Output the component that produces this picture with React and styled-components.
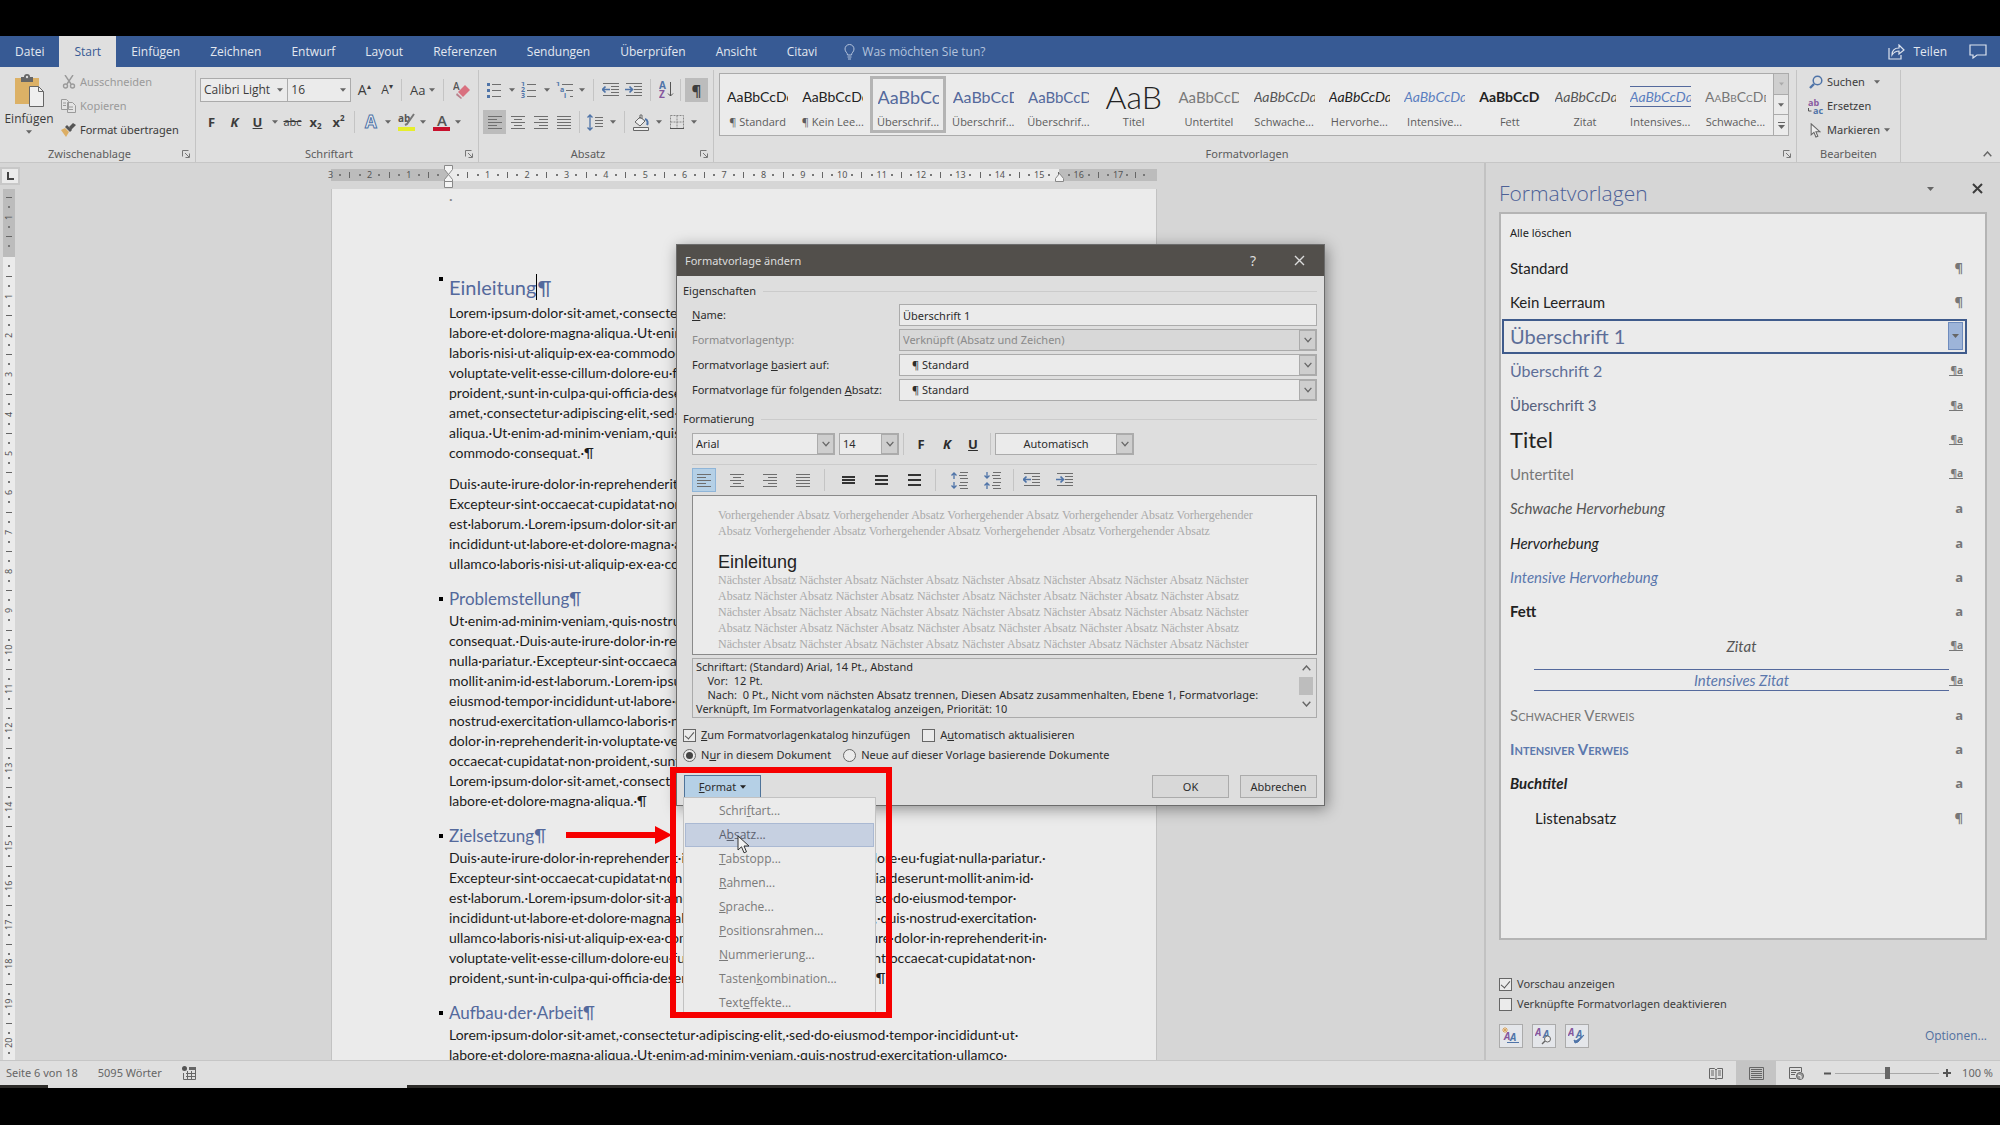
import React from 'react'
import styled, { createGlobalStyle, css } from 'styled-components'

const UI = '"Open Sans", "Noto Sans", sans-serif'
const UI_SMALL = '"Noto Sans", "Open Sans", sans-serif'
const CALIBRI = 'Lato, "Open Sans", sans-serif'

const C = {
  word: '#375a94',
  ribbon: '#dfdfdf',
  work: '#d6d6d6',
  paper: '#ebebeb',
  line: '#bdbdbd',
  border: '#ababab',
  text: '#3c3c3c',
  heading: '#54699c',
  icon: '#6e6e6e',
  blue: '#4f74a8',
  red: '#f60000',
}

const GlobalStyle = createGlobalStyle`
  * { box-sizing: border-box; }
  body { margin: 0; background: #000; }
  button, input, select { font: inherit; color: inherit; margin: 0; }
  button { background: none; border: 0; padding: 0; cursor: pointer; }
  svg { display: block; flex: none; }
`

const Screen = styled.div`
  position: relative;
  display: flex;
  flex-direction: column;
  height: 100vh;
  padding: 36px 0 37px;
  overflow: hidden;
  background: #000;
  color: ${C.text};
  font: 11px/16px ${UI_SMALL};
`

/* ---------- tab strip ---------- */

const TabStrip = styled.nav`
  display: flex;
  align-items: stretch;
  height: 31px;
  flex: none;
  background: ${C.word};
  color: #e3e8f0;
  font: 12px/16px ${UI};
`

const Tab = styled.button`
  padding: 0 15px;
  ${p => p.$active && css`
    background: ${C.ribbon};
    color: ${C.word};
  `}
`

const TellMe = styled.button`
  display: flex;
  align-items: center;
  gap: 7px;
  padding: 0 12px;
  color: #b4c3dc;
`

const ShareArea = styled.div`
  display: flex;
  align-items: center;
  gap: 22px;
  margin-left: auto;
  padding-right: 13px;
`

const ShareButton = styled.button`
  display: flex;
  align-items: center;
  gap: 8px;
`

/* ---------- ribbon ---------- */

const Ribbon = styled.div`
  display: flex;
  flex: none;
  height: 96px;
  padding: 3px 0 0;
  background: ${C.ribbon};
  border-bottom: 1px solid #c6c6c6;
`

const Group = styled.section`
  display: flex;
  flex-direction: column;
  padding: 0 4px;
  width: ${p => p.$w ? p.$w + 'px' : 'auto'};
  flex: ${p => p.$grow ? '1 1 0' : 'none'};
  min-width: 0;
  border-right: 1px solid #c4c4c4;
`

const GroupBody = styled.div`
  display: flex;
  flex-direction: ${p => p.$column ? 'column' : 'row'};
  flex: 1;
`

const GroupFooter = styled.div`
  display: flex;
  align-items: center;
  height: 16px;
  text-align: center;
  color: #5c5c5c;
  span { flex: 1; }
  button { padding: 2px 1px 2px 7px; }
`

const PasteButton = styled.button`
  display: flex;
  flex-direction: column;
  align-items: center;
  gap: 3px;
  width: 50px;
  padding-top: 4px;
  font: 12px/16px ${UI};
`

const CommandList = styled.div`
  display: flex;
  flex-direction: column;
  padding-left: 7px;
`

const Command = styled.button`
  display: flex;
  align-items: center;
  gap: 4px;
  height: 24px;
  white-space: nowrap;
  color: ${p => p.$off ? '#9a9a9a' : C.text};
`

const IconSlot = styled.span`
  display: flex;
  justify-content: center;
  width: 15px;
`

const ToolRow = styled.div`
  display: flex;
  align-items: center;
  height: 24px;
  margin-top: ${p => p.$mt || 0}px;
`

const Tool = styled.button`
  display: flex;
  align-items: center;
  justify-content: center;
  width: ${p => p.$w || 23}px;
  height: 24px;
  font-family: ${UI};
  font-size: ${p => p.$size || 13}px;
  font-weight: ${p => p.$bold ? 700 : 400};
  font-style: ${p => p.$italic ? 'italic' : 'normal'};
  text-decoration: ${p => p.$line || 'none'};
  background: ${p => p.$active ? '#bcbcbc' : 'none'};
  sub, sup { font-size: 8px; line-height: 8px; }
  sub { align-self: flex-end; margin-bottom: 4px; }
  sup { align-self: flex-start; margin-top: 4px; }
`

const Sep = styled.span`
  width: 1px;
  height: 22px;
  margin: 0 ${p => p.$m ?? 4}px;
  background: #c4c4c4;
`

const RibbonSelectBox = styled.span`
  display: grid;
  width: ${p => p.$w}px;
  height: 24px;
  align-items: center;
  border: 1px solid ${C.border};
  background: ${C.paper};
  margin-right: -1px;
  select {
    grid-area: 1 / 1;
    appearance: none;
    height: 22px;
    padding: 0 3px;
    border: 0;
    background: none;
    font: 12px/16px ${UI};
  }
  svg { grid-area: 1 / 1; justify-self: end; margin-right: 4px; pointer-events: none; }
`

const Gallery = styled.div`
  display: flex;
  align-self: flex-start;
  flex: 1;
  min-width: 0;
  height: 63px;
  margin: 3px 3px 0 1px;
  border: 1px solid ${C.border};
  background: ${C.paper};
`

const GalleryItem = styled.button`
  display: flex;
  flex-direction: column;
  align-items: center;
  flex: 1 1 0;
  min-width: 0;
  margin: 2px 0;
  padding: 0 4px;
  border: 3px solid ${p => p.$active ? '#b4b4b4' : 'transparent'};
`

const Sample = styled.span`
  display: flex;
  align-items: center;
  justify-content: ${p => p.$size > 20 ? 'center' : 'flex-start'};
  width: 61px;
  height: 26px;
  margin: 5px 0 5px;
  overflow: hidden;
  white-space: nowrap;
  font-family: ${CALIBRI};
  font-size: ${p => p.$size || 14}px;
  font-weight: ${p => p.$weight || 400};
  font-style: ${p => p.$italic ? 'italic' : 'normal'};
  font-variant: ${p => p.$caps ? 'small-caps' : 'normal'};
  color: ${p => p.$color || '#222'};
  ${p => p.$ruled && css`
    height: 22px;
    margin: 7px 0;
    border: solid ${C.heading};
    border-width: 1px 0;
  `}
`

const SampleName = styled.span`
  white-space: nowrap;
  font: 11px/16px ${UI};
  color: #5c5c5c;
`

const GalleryScroll = styled.div`
  display: flex;
  flex-direction: column;
  width: 15px;
  button {
    flex: 1;
    display: flex;
    align-items: center;
    justify-content: center;
    border-left: 1px solid ${C.border};
    border-bottom: 1px solid ${C.border};
  }
  button:first-child { background: #cfcfcf; }
  button:last-child { border-bottom: 0; }
`

const RibbonEnd = styled.div`
  display: flex;
  align-items: flex-end;
  justify-content: flex-end;
  width: 99px;
  padding: 0 8px 5px;
`

/* ---------- document area ---------- */

const Middle = styled.div`
  display: flex;
  flex: 1;
  min-height: 0;
  background: ${C.work};
`

const Editor = styled.main`
  display: flex;
  flex-direction: column;
  flex: 1;
  min-width: 0;
`

const RulerRow = styled.div`
  display: flex;
  height: 26px;
  flex: none;
  padding-top: 4px;
`

const TabSelector = styled.button`
  width: 20px;
  height: 18px;
  border: 2px solid #c8c8c8;
  background: ${C.paper};
  display: flex;
  align-items: center;
  justify-content: center;
`

const RulerTrack = styled.div`
  flex: 1;
  display: flex;
  justify-content: center;
  padding-right: 16px;
`

const Ruler = styled.div`
  position: relative;
  display: flex;
  width: 826px;
  height: 12px;
  margin-top: 2px;
  background: linear-gradient(to right, #bcbcbc 118px, ${C.paper} 118px 728px, #bcbcbc 728px);
  font-size: 9px;
  line-height: 12px;
  color: #555;
`

const RulerCells = styled.div`
  display: grid;
  grid-template-columns: repeat(20, 1fr);
  flex: none;
  width: 788px;
`

const RulerCell = styled.div`
  display: grid;
  grid-template-columns: repeat(4, 1fr);
  justify-items: center;
  align-items: center;
  i { width: 2px; height: 2px; background: #777; }
  b { width: 1px; height: 6px; background: #666; }
  span { width: 0; display: flex; justify-content: center; }
`

const RulerEdge = styled.span`
  flex: none;
  width: 4px;
  text-indent: -3px;
`

const RulerTail = styled(RulerCell)`
  flex: none;
  width: 34px;
`

// drag handles lying over the ruler
const IndentMarker = styled.svg`
  position: absolute;
  left: ${p => p.$x}px;
  top: ${p => p.$y}px;
`

const Canvas = styled.div`
  display: flex;
  flex: 1;
  min-height: 0;
  overflow: hidden;
`

const VRulerColumn = styled.div`
  width: 20px;
  padding-left: 3px;
`

const VRuler = styled.div`
  width: 12px;
  min-height: 100%;
  font-size: 9px;
  line-height: 12px;
  color: #555;
  background: linear-gradient(#bcbcbc 68px, ${C.paper} 68px);
  padding-top: 4px;
`

const VCell = styled.div`
  display: grid;
  grid-template-rows: repeat(4, 1fr);
  height: 39px;
  justify-items: center;
  align-items: center;
  &:nth-child(3n) { height: 40px; }
  i { width: 2px; height: 2px; background: #777; }
  b { width: 6px; height: 1px; background: #666; }
  span { writing-mode: vertical-rl; transform: rotate(180deg); height: 10px; display: flex; justify-content: center; }
`

const PageTrack = styled.div`
  flex: 1;
  display: flex;
  justify-content: center;
  padding-right: 16px;
`

const Page = styled.article`
  width: 826px;
  padding: 0 97px 0 117px;
  background: ${C.paper};
  border: solid #c2c2c2;
  border-width: 0 1px;
  font: 14px/20px ${CALIBRI};
  color: #1c1c1c;
  white-space: nowrap;
`

const HeaderMark = styled.div`
  height: 82px;
  color: #888;
`

const Heading = styled.h2`
  display: flex;
  align-items: center;
  height: ${p => p.$big ? 32 : 24}px;
  margin: ${p => p.$big ? 0 : 13}px 0 0 -10px;
  font-size: ${p => p.$big ? 20 : 17}px;
  font-weight: 400;
  color: ${C.heading};
  &::before {
    content: '';
    width: 4px;
    height: 4px;
    margin-right: 6px;
    background: #000;
    align-self: ${p => p.$big ? 'flex-start' : 'center'};
    margin-top: ${p => p.$big ? 6 : 0}px;
  }
`

const Caret = styled.span`
  width: 1px;
  height: 26px;
  background: #000;
`

const Paragraph = styled.p`
  margin: 0;
  & + & { margin-top: 11px; }
  span { display: block; }
`

/* ---------- styles pane ---------- */

const Pane = styled.aside`
  display: flex;
  flex-direction: column;
  width: 516px;
  padding: 10px 13px 0 13px;
  border-left: 2px solid #c2c2c2;
`

const PaneHeader = styled.header`
  display: flex;
  align-items: center;
  height: 39px;
  padding-bottom: 8px;
  gap: 37px;
  h1 {
    flex: 1;
    margin: 8px 0 0;
    font: 300 21px/30px ${UI};
    color: #4d6196;
  }
  button:last-child { margin-right: 4px; }
`

const StyleList = styled.ul`
  display: flex;
  flex-direction: column;
  height: 728px;
  margin: 0;
  padding: 2px 18px 103px 1px;
  list-style: none;
  border: 2px solid #b4b4b4;
  background: ${C.paper};
  li { flex: 1; display: flex; }
`

const StyleRow = styled.button`
  flex: 1;
  display: flex;
  align-items: center;
  padding: 0 2px 0 6px;
  text-align: left;
  border: 2px solid ${p => p.$active ? '#3f5b8c' : 'transparent'};
`

const StyleLabel = styled.span`
  flex: 1;
  font-family: ${p => p.$ui ? UI_SMALL : CALIBRI};
  font-size: ${p => p.$size || 15}px;
  line-height: 20px;
  color: ${p => p.$color || '#222'};
  font-weight: ${p => p.$weight || 400};
  font-style: ${p => p.$italic ? 'italic' : 'normal'};
  font-variant: ${p => p.$caps ? 'small-caps' : 'normal'};
  text-align: ${p => p.$center ? 'center' : 'left'};
  margin-left: ${p => p.$indent || 0}px;
  ${p => p.$ruled && css`
    border: solid ${C.heading};
    border-width: 1px 0;
  `}
`

const StyleMark = styled.span`
  width: 14px;
  text-align: right;
  font: 700 12px/14px ${UI};
  color: #777;
  border-bottom: ${p => p.$linked ? '1px solid #777' : 0};
  font-size: ${p => p.$linked ? 10 : 13}px;
  line-height: ${p => p.$linked ? 10 : 14}px;
`

const RowArrow = styled.span`
  display: flex;
  align-items: center;
  justify-content: center;
  width: 15px;
  height: 28px;
  border: 1px solid #6e8bbd;
  background: #9db4d9;
`

const PaneChecks = styled.div`
  display: flex;
  flex-direction: column;
  gap: 4px;
  margin-top: 36px;
`

const CheckLabel = styled.label`
  display: flex;
  align-items: center;
  gap: 5px;
  height: 16px;
  white-space: nowrap;
`

const CheckInput = styled.input`
  appearance: none;
  display: grid;
  place-items: center;
  width: 13px;
  height: 13px;
  border: 1px solid #666;
  background: ${C.paper};
  border-radius: ${p => p.type === 'radio' ? '50%' : 0};
  &[type='checkbox']:checked::after {
    content: '';
    width: 4px;
    height: 8px;
    margin-bottom: 2px;
    border: solid #555;
    border-width: 0 1px 1px 0;
    transform: rotate(40deg);
  }
  &[type='radio']:checked::after {
    content: '';
    width: 7px;
    height: 7px;
    border-radius: 50%;
    background: #444;
  }
`

const PaneFooter = styled.footer`
  display: flex;
  align-items: center;
  gap: 9px;
  margin-top: 12px;
  font: 12px/16px ${UI};
  a { margin-left: auto; color: #52709f; text-decoration: none; }
`

const PaneButton = styled.button`
  display: grid;
  place-items: center;
  width: 24px;
  height: 24px;
  border: 1px solid ${C.border};
  background: #e4e6ea;
`

/* ---------- status bar ---------- */

const StatusBar = styled.footer`
  display: flex;
  align-items: center;
  flex: none;
  height: 25px;
  padding: 0 7px 0 6px;
  gap: 20px;
  border-top: 1px solid #c6c6c6;
  background: ${C.ribbon};
  color: #666;
`

const ViewButtons = styled.div`
  display: flex;
  align-self: stretch;
  margin: 0 -12px 0 auto;
  button {
    display: grid;
    place-items: center;
    width: 40px;
  }
  button:nth-child(2) { background: #c4c4c4; }
`

const Zoom = styled.div`
  display: flex;
  align-items: center;
  gap: 4px;
  input {
    appearance: none;
    width: 104px;
    height: 13px;
    background: linear-gradient(#a8a8a8, #a8a8a8) center / 100% 1px no-repeat;
  }
  input::-webkit-slider-thumb {
    appearance: none;
    width: 5px;
    height: 12px;
    background: #666;
  }
  span { margin-left: 7px; }
`

const TaskbarEdge = styled.div`
  flex: none;
  height: 3px;
  background: linear-gradient(to right, #2c2b28 48px, #dcdcdc 48px 407px, #2c2b28 407px);
`

/* ---------- dialog ---------- */

const Dialog = styled.form`
  position: absolute;
  left: 676px;
  top: 244px;
  width: 649px;
  border: 1px solid #6c6c6c;
  background: #dedede;
  box-shadow: 2px 3px 14px rgba(0, 0, 0, 0.4);
  color: #2c2c2c;
`

const DialogTitle = styled.header`
  display: flex;
  align-items: center;
  height: 31px;
  padding: 0 19px 0 8px;
  gap: 38px;
  background: #524f4b;
  color: #dcdcdc;
  h1 { flex: 1; margin: 0; font-size: 11px; font-weight: 400; }
  button { font-size: 14px; }
`

const DialogBody = styled.div`
  display: flex;
  flex-direction: column;
  padding: 6px 7px 7px 6px;
`

const Legend = styled.div`
  display: flex;
  align-items: center;
  gap: 7px;
  height: 18px;
  &::after { content: ''; flex: 1; height: 1px; background: #cbcbcb; }
`

const Fields = styled.div`
  display: grid;
  grid-template-columns: 207px 1fr;
  row-gap: 3px;
  align-items: center;
  margin: 4px 0 9px 9px;
  label { white-space: nowrap; }
  label[data-off='true'] { color: #8a8a8a; }
`

const TextField = styled.input`
  height: 22px;
  padding: 0 3px;
  border: 1px solid ${C.border};
  background: ${C.paper};
`

const SelectBox = styled.span`
  display: grid;
  align-items: center;
  height: 22px;
  width: ${p => p.$w ? p.$w + 'px' : 'auto'};
  border: 1px solid ${C.border};
  background: ${p => p.$off ? '#d8d8d8' : C.paper};
  select {
    grid-area: 1 / 1;
    appearance: none;
    width: 100%;
    height: 20px;
    padding: 0 20px 0 ${p => p.$pad ?? 3}px;
    border: 0;
    background: none;
    opacity: 1;
    color: ${p => p.$off ? '#8a8a8a' : 'inherit'};
    text-align: ${p => p.$center ? 'center' : 'left'};
  }
`

const Arrow = styled.span`
  grid-area: 1 / 1;
  justify-self: end;
  display: grid;
  place-items: center;
  width: 17px;
  height: 20px;
  border: 1px solid ${C.border};
  background: #cecece;
  pointer-events: none;
`

const FormatRow = styled.div`
  display: flex;
  align-items: center;
  margin: ${p => p.$mt}px 0 0 9px;
  padding-bottom: ${p => p.$line ? 8 : 3}px;
  border-bottom: ${p => p.$line ? '1px solid #cbcbcb' : 0};
`

const Spacer = styled.span`
  width: ${p => p.$w}px;
`

const AlignTool = styled.button`
  display: grid;
  place-items: center;
  width: 24px;
  height: 24px;
  margin-right: 9px;
  border: 1px solid ${p => p.$active ? '#8fb5d8' : 'transparent'};
  background: ${p => p.$active ? '#b5d0e6' : 'none'};
`

const Preview = styled.div`
  height: 160px;
  margin: 0 0 3px 9px;
  padding: 11px 25px 0;
  overflow: hidden;
  border: 1px solid #8a8a8a;
  background: ${C.paper};
  font: 12px/16px "Liberation Serif", serif;
  color: #a9a9a9;
  white-space: nowrap;
  p { margin: 0; }
  h2 {
    margin: 13px 0 0;
    font: 18px/20px "Liberation Sans", sans-serif;
    color: #222;
  }
  span { display: block; }
`

const Description = styled.div`
  display: flex;
  height: 60px;
  margin-left: 9px;
  padding: 1px 2px 1px 3px;
  border: 1px solid ${C.border};
  line-height: 14px;
  p { flex: 1; margin: 0; white-space: pre; }
`

const ScrollBar = styled.div`
  display: flex;
  flex-direction: column;
  align-items: center;
  width: 16px;
  padding: 5px 0;
  gap: 6px;
  i { width: 14px; height: 18px; background: #bdbdbd; }
`

const Choices = styled.div`
  display: flex;
  gap: 12px;
  margin-top: ${p => p.$mt}px;
`

const DialogButtons = styled.div`
  position: relative;
  display: flex;
  gap: 11px;
  margin: 12px 0 0 1px;
`

const DialogButton = styled.button`
  display: flex;
  align-items: center;
  justify-content: center;
  gap: 4px;
  width: 77px;
  height: 23px;
  border: 1px solid ${C.border};
  background: #d8d8d8;
  ${p => p.$primary && css`
    margin-right: auto;
    border-color: #4f7399;
    background: #b5d0e6;
  `}
`

const Menu = styled.ul`
  position: absolute;
  left: -1px;
  top: 22px;
  width: 193px;
  margin: 0;
  padding: 1px 1px 0;
  list-style: none;
  border: 1px solid #c2c2c2;
  background: ${C.paper};
`

const MenuItem = styled.button`
  display: block;
  width: 100%;
  height: 24px;
  padding-left: 33px;
  text-align: left;
  font: 12px/16px ${UI};
  color: ${p => p.$active ? '#5c6270' : '#7a7a7a'};
  border: 1px solid ${p => p.$active ? '#aab9d3' : 'transparent'};
  background: ${p => p.$active ? '#c6d0e1' : 'none'};
`

/* ---------- annotations ---------- */

const RedFrame = styled.div`
  position: absolute;
  left: 670px;
  top: 767px;
  width: 222px;
  height: 251px;
  border: 6px solid ${C.red};
  pointer-events: none;
`

const RedArrow = styled.svg`
  position: absolute;
  left: 566px;
  top: 826px;
`

const Pointer = styled.svg`
  position: absolute;
  left: 737px;
  top: 834px;
`

/* ---------- icons ---------- */

const Down = ({ s = 7, c = '#666' }) => (
  <svg width={s} height={4} viewBox="0 0 7 4"><path d="M0 0h7L3.5 4z" fill={c} /></svg>
)

const Chevron = ({ up, c = '#666', s = 9 }) => (
  <svg width={s} height="6" viewBox="0 0 9 6">
    <path d={up ? 'M.7 5.3 4.5 1l3.8 4.3' : 'M.7.7 4.5 5 8.3.7'} fill="none" stroke={c} strokeWidth="1.4" />
  </svg>
)

const Cross = ({ s = 11, w = 1.4 }) => (
  <svg width={s} height={s} viewBox="0 0 11 11"><path d="M1 1l9 9M10 1l-9 9" stroke="currentColor" strokeWidth={w} /></svg>
)

const Launcher = () => (
  <svg width="8" height="8" viewBox="0 0 8 8" fill="none" stroke="#777">
    <path d="M.5 6.500V.5h6M3 3l4 4M7.500 3.500v4h-4" />
  </svg>
)

const ALIGN = {
  left: [[0, 14], [0, 9], [0, 14], [0, 9], [0, 14]],
  center: [[0, 14], [3, 8], [0, 14], [3, 8], [0, 14]],
  right: [[0, 14], [5, 9], [0, 14], [5, 9], [0, 14]],
  justify: [[0, 14], [0, 14], [0, 14], [0, 14], [0, 14]],
}

const AlignIcon = ({ kind }) => (
  <svg width="14" height="13" viewBox="0 0 14 13" fill={C.icon}>
    {ALIGN[kind].map(([x, w], i) => <rect key={i} x={x} y={i * 3} width={w} height="1" />)}
  </svg>
)

const SpacingIcon = ({ gap }) => (
  <svg width="13" height="14" viewBox="0 0 13 14" fill="#333">
    {[-1, 0, 1].map(i => <rect key={i} x="0" y={6 + i * gap} width="13" height="2" />)}
  </svg>
)

const ParaSpaceIcon = ({ inward }) => (
  <svg width="17" height="17" viewBox="0 0 17 17" fill="none">
    <path d={inward ? 'M3 0v6M.5 3.500 3 6l2.500-2.500M3 17v-6M.5 13.500 3 11l2.500 2.500' : 'M3 7V1M.5 3.500 3 1l2.500 2.500M3 10v6M.5 13.500 3 16l2.500-2.500'} stroke={C.blue} strokeWidth="1.300" />
    <path d="M9 .5h8M8 3.500h8M9 6.500h8M9 10.500h8M8 13.500h8M9 16.500h8" stroke={C.icon} />
  </svg>
)

const IndentIcon = ({ inward }) => (
  <svg width="17" height="14" viewBox="0 0 17 14" fill="none">
    <path d="M1 .5h16M9 3.500h8M9 6.500h8M9 9.500h8M1 12.500h16" stroke={C.icon} />
    <path d={inward ? 'M0 6.500h7M4.500 3.500l3 3-3 3' : 'M8 6.500H1M3.500 3.500l-3 3 3 3'} stroke={C.blue} strokeWidth="1.700" />
  </svg>
)

const ListIcon = ({ kind }) => (
  <svg width="17" height="16" viewBox="0 0 17 16">
    {[1, 7, 13].map((y, i) => {
      const dx = kind === 'multi' ? i * 4 : 0
      return (
        <g key={y}>
          {kind === 'bullet'
            ? <rect x="1" y={y} width="3" height="3" fill={C.blue} />
            : <text x={dx} y={y + 3} fontSize="7" fontWeight="700" fill={C.blue} fontFamily="Open Sans">{kind === 'multi' ? ['1', 'a', 'i'][i] : i + 1}</text>}
          <rect x={6 + dx} y={y + 1} width={kind === 'multi' ? 11 - dx : 9} height="1" fill={C.icon} />
        </g>
      )
    })}
  </svg>
)

const SortIcon = () => (
  <svg width="15" height="18" viewBox="0 0 15 18">
    <text x="0" y="8" fontSize="10" fontWeight="700" fill={C.blue} fontFamily="Open Sans">A</text>
    <text x="0" y="17" fontSize="10" fontWeight="700" fill="#85569c" fontFamily="Open Sans">Z</text>
    <path d="M11.500 1v14M9 12.500l2.500 2.500 2.500-2.500" fill="none" stroke="#555" />
  </svg>
)

const LineHeightIcon = () => (
  <svg width="17" height="17" viewBox="0 0 17 17" fill="none">
    <path d="M3 1v15M.5 3.500 3 1l2.500 2.500M.5 13.500 3 16l2.500-2.500" stroke={C.blue} strokeWidth="1.300" />
    <path d="M8 3.500h8M8 6.500h8M8 9.500h8M8 12.500h8" stroke={C.icon} />
  </svg>
)

const FillIcon = () => (
  <svg width="17" height="17" viewBox="0 0 17 17" fill="none" stroke="#666">
    <path d="M7 3 2 8l5 4 5-5zM7 5V1h2v4" fill="#eee" />
    <path d="M12 5c3 1 3 4 2 6" stroke={C.blue} strokeWidth="2" />
    <path d="M.5 13.500h15v3H.5z" fill="#eee" />
  </svg>
)

const BorderIcon = () => (
  <svg width="14" height="14" viewBox="0 0 14 14" fill="none" stroke="#888">
    <path d="M.5.5h13v13H.5zM7 .5v13M.5 7h13" strokeDasharray="2 1" /><path d="M0 13.500h14" stroke="#555" />
  </svg>
)

const PasteIcon = () => (
  <svg width="31" height="34" viewBox="0 0 31 34">
    <rect x="1" y="4" width="24" height="26" fill="#dcb166" />
    <path d="M7 8V3h3a3 3 0 0 1 6 0h3v5z" fill="#666" />
    <circle cx="13" cy="3" r="1.200" fill="#ddd" />
    <path d="M15.500 12.500h9l5 5v15h-14z" fill="#efefef" stroke="#666" />
    <path d="M24.500 12.500v5h5" fill="none" stroke="#666" />
  </svg>
)

const ScissorsIcon = () => (
  <svg width="14" height="14" viewBox="0 0 14 14" fill="none" stroke="#9a9a9a" strokeWidth="1.400">
    <path d="M3 0l6 9M11 0 5 9" /><circle cx="3.500" cy="11" r="2" /><circle cx="10.500" cy="11" r="2" />
  </svg>
)

const CopyIcon = () => (
  <svg width="15" height="14" viewBox="0 0 15 14" fill="#e4e4e4" stroke="#9a9a9a">
    <path d="M.5.5h5l2 2v8h-7zM6.500 3.500h5l3 3v7h-8z" /><path d="M8 8h4M8 10.500h4M2 4h3M2 6.500h3" />
  </svg>
)

const BrushIcon = () => (
  <svg width="15" height="14" viewBox="0 0 15 14">
    <path d="M0 7l4-2 4 4-3 5z" fill="#dcae64" /><path d="M4 4l2-2 5 5-2 2z" fill="#555" /><path d="M8 4l4-4 3 2-5 5z" fill="#555" />
  </svg>
)

const EraserIcon = () => (
  <svg width="17" height="18" viewBox="0 0 17 18">
    <text x="0" y="9" fontSize="10" fontWeight="600" fill="#555" fontFamily="Open Sans">A</text>
    <path d="M5 11l7-7 5 5-7 7z" fill="#d9707f" /><path d="M4 12l5 5-1 1-5-4z" fill="#b9808c" />
  </svg>
)

const MagnifierIcon = () => (
  <svg width="14" height="14" viewBox="0 0 14 14" fill="none">
    <circle cx="8.500" cy="5.500" r="4.300" stroke={C.blue} strokeWidth="1.500" /><path d="M5 9l-4 4" stroke={C.blue} strokeWidth="2.400" />
  </svg>
)

const ReplaceIcon = () => (
  <svg width="17" height="17" viewBox="0 0 17 17" fontFamily="Open Sans" fontWeight="700">
    <text x="1" y="8" fontSize="9" fill="#8a5ba0">ab</text>
    <text x="6" y="16" fontSize="9" fill={C.blue}>ac</text>
    <path d="M1.500 10v3h3" fill="none" stroke="#555" />
  </svg>
)

const ArrowPath = 'M1 1v14l3.500-3.200 2.500 6 2.500-1-2.500-5.800H12z'

const SelectIcon = () => (
  <svg width="11" height="15" viewBox="0 0 13 19"><path d={ArrowPath} fill="#eee" stroke="#666" strokeWidth="1.300" /></svg>
)

const BulbIcon = () => (
  <svg width="11" height="16" viewBox="0 0 11 16" fill="none" stroke="#b4c3dc">
    <path d="M3.500 11C3.500 8.500 1 8 1 5a4.500 4.500 0 0 1 9 0c0 3-2.500 3.500-2.500 6zM3.500 13h4M4 15h3" />
  </svg>
)

const ShareIcon = () => (
  <svg width="17" height="16" viewBox="0 0 17 16" fill="none" stroke="#dde3ee" strokeWidth="1.200">
    <path d="M1 4v11h12v-4M4 11c0-5 3-7 7-7V1l5 5-5 4V7c-3 0-5 1-7 4z" />
  </svg>
)

const CommentIcon = () => (
  <svg width="18" height="15" viewBox="0 0 18 15" fill="none" stroke="#dde3ee" strokeWidth="1.200">
    <path d="M1 1h16v10H8l-4 3v-3H1z" />
  </svg>
)

const BookIcon = () => (
  <svg width="14" height="13" viewBox="0 0 14 13" fill="none" stroke="#666">
    <path d="M.5 1.500h5L7 3l1.500-1.500h5v10h-5L7 12.500 5.500 11.500h-5zM7 3v9M2 4h3M2 6h3M2 8h3M9 4h3M9 6h3M9 8h3" />
  </svg>
)

const PrintViewIcon = () => (
  <svg width="15" height="13" viewBox="0 0 15 13" fill="none" stroke="#666">
    <path d="M.5.500h14v12H.5zM2 2.500h11M2 4.500h11M2 6.500h11M2 8.500h11M2 10.500h11" />
  </svg>
)

const WebViewIcon = () => (
  <svg width="15" height="13" viewBox="0 0 15 13" fill="none" stroke="#666">
    <path d="M7 11.500H.5V.5h12V5M2 3.500h9M2 5.500h5M2 7.500h4" /><circle cx="11" cy="9" r="3.500" fill="#999" /><path d="M9 8l3 1v3" stroke="#eee" />
  </svg>
)

const MacroIcon = () => (
  <svg width="14" height="14" viewBox="0 0 14 14" fill="none" stroke="#666">
    <path d="M7 2.500h6.500v11H1.500V7M4 7.500h9M4 10.500h9M5.500 5v8M9.500 5v8" /><path d="M7 1h7v3H7z" fill="#666" stroke="none" /><circle cx="2.500" cy="2.500" r="2.500" fill="#555" stroke="none" />
  </svg>
)

const StyleButtonIcon = ({ kind }) => (
  <svg width="18" height="18" viewBox="0 0 18 18" fontFamily="Open Sans" fontWeight="700" fontStyle="italic">
    <text x={kind === 'new' ? 2 : 0} y={kind === 'new' ? 13 : 9} fontSize="10" fill="#85569c">A</text>
    <text x="8" y={kind === 'new' ? 14 : 11} fontSize="10" fill={C.blue}>A</text>
    {kind === 'new' && <><path d="M3 0v6M0 3h6M1 1l4 4M5 1 1 5" stroke="#dba45a" /><path d="M5 15.500h12" stroke={C.blue} /></>}
    {kind === 'inspect' && <><circle cx="12.500" cy="12" r="3" fill="#eee" stroke="#666" /><path d="M10 14l-3 3" stroke="#666" strokeWidth="1.500" /></>}
    {kind === 'manage' && <path d="M16 8l-6 7-3 1-1-3 2 1z" fill={C.blue} stroke={C.blue} />}
  </svg>
)

const GlowA = () => (
  <svg width="16" height="18" viewBox="0 0 16 18">
    <text x="2" y="15" fontSize="17" fontWeight="700" fill="#eee" stroke={C.blue} strokeWidth="1" fontFamily="Open Sans">A</text>
  </svg>
)

const ColorBar = ({ color, children }) => (
  <svg width="18" height="20" viewBox="0 0 18 20" fontFamily="Open Sans">
    {children}
    <rect x="1" y="15" width="17" height="4" fill={color} />
  </svg>
)

/* ---------- data ---------- */

const TABS = ['Datei', 'Start', 'Einfügen', 'Zeichnen', 'Entwurf', 'Layout', 'Referenzen', 'Sendungen', 'Überprüfen', 'Ansicht', 'Citavi']

const GALLERY = [
  { name: '¶ Standard', text: 'AaBbCcDd' },
  { name: '¶ Kein Lee...', text: 'AaBbCcDd' },
  { name: 'Überschrif...', text: 'AaBbCcD', size: 18, color: C.heading, active: true },
  { name: 'Überschrif...', text: 'AaBbCcD', size: 16, color: C.heading },
  { name: 'Überschrif...', text: 'AaBbCcD', size: 15, color: C.heading },
  { name: 'Titel', text: 'AaB', size: 32, weight: 300 },
  { name: 'Untertitel', text: 'AaBbCcD', size: 15, color: '#7a7a7a' },
  { name: 'Schwache...', text: 'AaBbCcDd', italic: true, color: '#555' },
  { name: 'Hervorhe...', text: 'AaBbCcDd', italic: true },
  { name: 'Intensive...', text: 'AaBbCcDd', italic: true, color: '#5b7fc0' },
  { name: 'Fett', text: 'AaBbCcDd', weight: 700 },
  { name: 'Zitat', text: 'AaBbCcDd', italic: true, color: '#555' },
  { name: 'Intensives...', text: 'AaBbCcDd', italic: true, color: '#5b7fc0', ruled: true },
  { name: 'Schwache...', text: 'AaBbCcDd', caps: true, color: '#777' },
]

const STYLES = [
  { name: 'Alle löschen', ui: true, size: 11 },
  { name: 'Standard', mark: '¶' },
  { name: 'Kein Leerraum', mark: '¶' },
  { name: 'Überschrift 1', size: 20, color: '#5d6e98', active: true },
  { name: 'Überschrift 2', size: 16, color: '#5d6e98', mark: '¶a' },
  { name: 'Überschrift 3', size: 15, color: '#55617d', mark: '¶a' },
  { name: 'Titel', size: 22, mark: '¶a' },
  { name: 'Untertitel', size: 15, color: '#777', mark: '¶a' },
  { name: 'Schwache Hervorhebung', italic: true, color: '#555', mark: 'a' },
  { name: 'Hervorhebung', italic: true, mark: 'a' },
  { name: 'Intensive Hervorhebung', italic: true, color: '#5b78ad', mark: 'a' },
  { name: 'Fett', weight: 700, mark: 'a' },
  { name: 'Zitat', italic: true, center: true, indent: 24, color: '#555', mark: '¶a' },
  { name: 'Intensives Zitat', italic: true, center: true, indent: 24, ruled: true, color: '#5b78ad', mark: '¶a' },
  { name: 'Schwacher Verweis', caps: true, color: '#777', mark: 'a' },
  { name: 'Intensiver Verweis', caps: true, weight: 700, color: '#5b78ad', mark: 'a' },
  { name: 'Buchtitel', weight: 700, italic: true, mark: 'a' },
  { name: 'Listenabsatz', indent: 25, mark: '¶' },
]

const INTRO = [
  'Lorem ipsum dolor sit amet, consectetur adipiscing elit, sed do eiusmod tempor incididunt ut ',
  'labore et dolore magna aliqua. Ut enim ad minim veniam, quis nostrud exercitation ullamco ',
  'laboris nisi ut aliquip ex ea commodo consequat. Duis aute irure dolor in reprehenderit in ',
  'voluptate velit esse cillum dolore eu fugiat nulla pariatur. Excepteur sint occaecat cupidatat non ',
  'proident, sunt in culpa qui officia deserunt mollit anim id est laborum. Lorem ipsum dolor sit ',
  'amet, consectetur adipiscing elit, sed do eiusmod tempor incididunt ut labore et dolore magna ',
  'aliqua. Ut enim ad minim veniam, quis nostrud exercitation ullamco laboris nisi ut aliquip ex ea ',
  'commodo consequat. ¶',
]

const INTRO2 = [
  'Duis aute irure dolor in reprehenderit in voluptate velit esse cillum dolore eu fugiat nulla pariatur. ',
  'Excepteur sint occaecat cupidatat non proident, sunt in culpa qui officia deserunt mollit anim id ',
  'est laborum. Lorem ipsum dolor sit amet, consectetur adipiscing elit, sed do eiusmod tempor ',
  'incididunt ut labore et dolore magna aliqua. Ut enim ad minim veniam, quis nostrud exercitation ',
  'ullamco laboris nisi ut aliquip ex ea commodo consequat. ¶',
]

const PROBLEM = [
  'Ut enim ad minim veniam, quis nostrud exercitation ullamco laboris nisi ut aliquip ex ea commodo ',
  'consequat. Duis aute irure dolor in reprehenderit in voluptate velit esse cillum dolore eu fugiat ',
  'nulla pariatur. Excepteur sint occaecat cupidatat non proident, sunt in culpa qui officia deserunt ',
  'mollit anim id est laborum. Lorem ipsum dolor sit amet, consectetur adipiscing elit, sed do ',
  'eiusmod tempor incididunt ut labore et dolore magna aliqua. Ut enim ad minim veniam, quis ',
  'nostrud exercitation ullamco laboris nisi ut aliquip ex ea commodo consequat. Duis aute irure ',
  'dolor in reprehenderit in voluptate velit esse cillum dolore eu fugiat nulla pariatur. Excepteur sint ',
  'occaecat cupidatat non proident, sunt in culpa qui officia deserunt mollit anim id est laborum. ',
  'Lorem ipsum dolor sit amet, consectetur adipiscing elit, sed do eiusmod tempor incididunt ut ',
  'labore et dolore magna aliqua. ¶',
]

const GOAL = [
  ...INTRO2.slice(0, 4),
  'ullamco laboris nisi ut aliquip ex ea commodo consequat. Duis aute irure dolor in reprehenderit in ',
  'voluptate velit esse cillum dolore eu fugiat nulla pariatur. Excepteur sint occaecat cupidatat non ',
  'proident, sunt in culpa qui officia deserunt mollit anim id est laborum. ¶',
]

const STRUCTURE = INTRO.slice(0, 2)

const MENU = [
  ['Schri', 'f', 'tart...'],
  ['A', 'b', 'satz...'],
  ['', 'T', 'abstopp...'],
  ['', 'R', 'ahmen...'],
  ['', 'S', 'prache...'],
  ['', 'P', 'ositionsrahmen...'],
  ['', 'N', 'ummerierung...'],
  ['Tasten', 'k', 'ombination...'],
  ['Text', 'e', 'ffekte...'],
]

// formatting marks: spaces are shown as middle dots
const dots = s => s.replaceAll(' ', '·')

const repeat = (s, n) => Array(n).fill(s).join(' ')
const NEXT = [repeat('Nächster Absatz', 6) + ' Nächster', 'Absatz ' + repeat('Nächster Absatz', 6)]

/* ---------- parts ---------- */

const Lines = ({ lines }) => (
  <Paragraph>{lines.map((l, i) => <span key={i}>{dots(l)}</span>)}</Paragraph>
)

const Footer = ({ label, launcher = true }) => (
  <GroupFooter><span>{label}</span>{launcher && <button aria-label={label + ' öffnen'}><Launcher /></button>}</GroupFooter>
)

const CaretButton = ({ w = 12, label }) => <Tool $w={w} aria-label={label}><Down s={6} /></Tool>

const RibbonSelect = ({ label, value, w }) => (
  <RibbonSelectBox $w={w}>
    <select aria-label={label} defaultValue={value}><option>{value}</option></select>
    <Down s={6} />
  </RibbonSelectBox>
)

const Select = ({ id, label, value, off, ...rest }) => (
  <SelectBox $off={off} {...rest}>
    <select id={id} aria-label={label} disabled={off} defaultValue={value}><option>{value}</option></select>
    <Arrow><Chevron s={8} /></Arrow>
  </SelectBox>
)

const RibbonBar = () => (
  <Ribbon>
    <Group $w={196}>
      <GroupBody>
        <PasteButton><PasteIcon /><span>Einfügen</span><Down s={6} /></PasteButton>
        <CommandList>
          <Command $off><IconSlot><ScissorsIcon /></IconSlot>Ausschneiden</Command>
          <Command $off><IconSlot><CopyIcon /></IconSlot>Kopieren</Command>
          <Command><IconSlot><BrushIcon /></IconSlot>Format übertragen</Command>
        </CommandList>
      </GroupBody>
      <Footer label="Zwischenablage" />
    </Group>

    <Group $w={283}>
      <GroupBody $column>
        <ToolRow $mt={8}>
          <RibbonSelect label="Schriftart" value="Calibri Light" w={89} />
          <RibbonSelect label="Schriftgrad" value="16" w={64} />
          <Spacer $w={3} />
          <Tool $size={14}>A<sup>▴</sup></Tool>
          <Tool $size={12}>A<sup>▾</sup></Tool>
          <Sep $m={3} />
          <Tool $w={34}>Aa&nbsp;<Down s={6} /></Tool>
          <Sep />
          <Tool $w={26} aria-label="Formatierung löschen"><EraserIcon /></Tool>
        </ToolRow>
        <ToolRow $mt={8}>
          <Tool $bold>F</Tool>
          <Tool $bold $italic>K</Tool>
          <Tool $bold $line="underline">U</Tool>
          <CaretButton label="Unterstreichung" />
          <Tool $size={11} $line="line-through">abc</Tool>
          <Tool $bold>x<sub>2</sub></Tool>
          <Tool $bold>x<sup>2</sup></Tool>
          <Sep />
          <Tool aria-label="Texteffekte"><GlowA /></Tool>
          <CaretButton label="Texteffekte Auswahl" />
          <Tool aria-label="Hervorheben">
            <ColorBar color="#e6ee2c">
              <text x="1" y="10" fontSize="10" fontWeight="700" fill="#555">ab</text>
              <path d="M17 2l-7 10-2 1" fill="none" stroke="#777" strokeWidth="2" />
            </ColorBar>
          </Tool>
          <CaretButton label="Hervorhebungsfarbe" />
          <Tool aria-label="Schriftfarbe">
            <ColorBar color="#c8102c"><text x="5" y="14" fontSize="15" fontWeight="600" fill="#555">A</text></ColorBar>
          </Tool>
          <CaretButton label="Schriftfarbe Auswahl" />
        </ToolRow>
      </GroupBody>
      <Footer label="Schriftart" />
    </Group>

    <Group $w={235}>
      <GroupBody $column>
        <ToolRow $mt={8}>
          <Tool aria-label="Aufzählung"><ListIcon kind="bullet" /></Tool>
          <CaretButton label="Aufzählungszeichen" />
          <Tool aria-label="Nummerierung"><ListIcon kind="number" /></Tool>
          <CaretButton label="Zahlenformat" />
          <Tool aria-label="Liste mit mehreren Ebenen"><ListIcon kind="multi" /></Tool>
          <CaretButton label="Listenebenen" />
          <Sep $m={5} />
          <Tool aria-label="Einzug verkleinern"><IndentIcon /></Tool>
          <Tool aria-label="Einzug vergrößern"><IndentIcon inward /></Tool>
          <Sep $m={5} />
          <Tool $w={20} aria-label="Sortieren"><SortIcon /></Tool>
          <Sep $m={4} />
          <Tool $active $size={15} $bold>¶</Tool>
        </ToolRow>
        <ToolRow $mt={8}>
          <Tool $active aria-label="Linksbündig"><AlignIcon kind="left" /></Tool>
          <Tool aria-label="Zentriert"><AlignIcon kind="center" /></Tool>
          <Tool aria-label="Rechtsbündig"><AlignIcon kind="right" /></Tool>
          <Tool aria-label="Blocksatz"><AlignIcon kind="justify" /></Tool>
          <Sep />
          <Tool aria-label="Zeilenabstand"><LineHeightIcon /></Tool>
          <CaretButton label="Zeilenabstand Auswahl" />
          <Sep $m={5} />
          <Tool aria-label="Schattierung"><FillIcon /></Tool>
          <CaretButton label="Schattierung Auswahl" />
          <Tool aria-label="Rahmen"><BorderIcon /></Tool>
          <CaretButton label="Rahmen Auswahl" />
        </ToolRow>
      </GroupBody>
      <Footer label="Absatz" />
    </Group>

    <Group $grow>
      <GroupBody>
        <Gallery>
          {GALLERY.map((g, i) => (
            <GalleryItem key={i} $active={g.active}>
              <Sample $size={g.size} $weight={g.weight} $italic={g.italic} $caps={g.caps} $color={g.color} $ruled={g.ruled}>{g.text}</Sample>
              <SampleName>{g.name}</SampleName>
            </GalleryItem>
          ))}
          <GalleryScroll>
            <button aria-label="Nach oben"><Down s={5} c="#aaa" /></button>
            <button aria-label="Nach unten"><Down s={6} /></button>
            <button aria-label="Weitere">
              <svg width="7" height="7" viewBox="0 0 7 7" fill="#666"><path d="M0 0h7v1H0zM0 3h7L3.500 7z" /></svg>
            </button>
          </GalleryScroll>
        </Gallery>
      </GroupBody>
      <Footer label="Formatvorlagen" />
    </Group>

    <Group $w={104}>
      <GroupBody>
        <CommandList>
          <Command><IconSlot><MagnifierIcon /></IconSlot>Suchen <Spacer $w={1} /><Down s={6} /></Command>
          <Command><IconSlot><ReplaceIcon /></IconSlot>Ersetzen</Command>
          <Command><IconSlot><SelectIcon /></IconSlot>Markieren <Down s={6} /></Command>
        </CommandList>
      </GroupBody>
      <Footer label="Bearbeiten" launcher={false} />
    </Group>
    <RibbonEnd><button aria-label="Menüband reduzieren"><Chevron up /></button></RibbonEnd>
  </Ribbon>
)

const cmLabel = i => Math.abs(i - 2) || ''

const Document = () => (
  <Editor>
    <RulerRow>
      <TabSelector aria-label="Tabstopp">
        <svg width="7" height="8" viewBox="0 0 7 8"><path d="M1 0v7h6" fill="none" stroke="#444" strokeWidth="2" /></svg>
      </TabSelector>
      <RulerTrack>
        <Ruler>
          <RulerEdge>3</RulerEdge>
          <RulerCells>
            {Array.from({ length: 20 }, (_, i) => (
              <RulerCell key={i}><i /><b /><i /><span>{cmLabel(i)}</span></RulerCell>
            ))}
          </RulerCells>
          <RulerTail><i /><b /><i /></RulerTail>
          <IndentMarker $x={112} $y={-4} width="11" height="24" viewBox="0 0 11 24" fill="#f4f4f4" stroke="#888">
            <path d="M1.500.5h8v4l-4 5-4-5zM5.500 9.500l4 5v2h-8v-2zM1.500 16.500h8v6h-8z" />
          </IndentMarker>
          <IndentMarker $x={723} $y={4} width="11" height="10" viewBox="0 0 11 10" fill="#f4f4f4" stroke="#888">
            <path d="M5.500.5l4 5v3h-8v-3z" />
          </IndentMarker>
        </Ruler>
      </RulerTrack>
    </RulerRow>
    <Canvas>
      <VRulerColumn>
        <VRuler>
          {Array.from({ length: 22 }, (_, i) => (
            <VCell key={i}><b /><i /><span>{Math.abs(i - 1) || ''}</span><i /></VCell>
          ))}
        </VRuler>
      </VRulerColumn>
      <PageTrack>
        <Page>
          <HeaderMark>·</HeaderMark>
          <Heading $big>Einleitung<Caret />¶</Heading>
          <Lines lines={INTRO} />
          <Lines lines={INTRO2} />
          <Heading>Problemstellung¶</Heading>
          <Lines lines={PROBLEM} />
          <Heading>Zielsetzung¶</Heading>
          <Lines lines={GOAL} />
          <Heading>{dots('Aufbau der Arbeit')}¶</Heading>
          <Lines lines={STRUCTURE} />
        </Page>
      </PageTrack>
    </Canvas>
  </Editor>
)

const StylesPane = () => (
  <Pane>
    <PaneHeader>
      <h1>Formatvorlagen</h1>
      <button aria-label="Aufgabenbereichsoptionen"><Down s={9} /></button>
      <button aria-label="Schließen"><Cross w={2} /></button>
    </PaneHeader>
    <StyleList>
      {STYLES.map(s => (
        <li key={s.name}>
          <StyleRow $active={s.active}>
            <StyleLabel $ui={s.ui} $size={s.size} $color={s.color} $weight={s.weight} $italic={s.italic}
              $caps={s.caps} $center={s.center} $indent={s.indent} $ruled={s.ruled}>{s.name}</StyleLabel>
            {s.active && <RowArrow><Down /></RowArrow>}
            {s.mark && <StyleMark $linked={s.mark.length > 1}>{s.mark}</StyleMark>}
          </StyleRow>
        </li>
      ))}
    </StyleList>
    <PaneChecks>
      <CheckLabel><CheckInput type="checkbox" defaultChecked />Vorschau anzeigen</CheckLabel>
      <CheckLabel><CheckInput type="checkbox" />Verknüpfte Formatvorlagen deaktivieren</CheckLabel>
    </PaneChecks>
    <PaneFooter>
      <PaneButton aria-label="Neue Formatvorlage"><StyleButtonIcon kind="new" /></PaneButton>
      <PaneButton aria-label="Formatinspektor"><StyleButtonIcon kind="inspect" /></PaneButton>
      <PaneButton aria-label="Formatvorlagen verwalten"><StyleButtonIcon kind="manage" /></PaneButton>
      <a href="#optionen">Optionen...</a>
    </PaneFooter>
  </Pane>
)

const StyleDialog = () => (
  <Dialog onSubmit={e => e.preventDefault()}>
    <DialogTitle>
      <h1>Formatvorlage ändern</h1>
      <button type="button">?</button>
      <button type="button" aria-label="Schließen"><Cross /></button>
    </DialogTitle>
    <DialogBody>
      <Legend>Eigenschaften</Legend>
      <Fields>
        <label htmlFor="name"><u>N</u>ame:</label>
        <TextField id="name" defaultValue="Überschrift 1" />
        <label htmlFor="type" data-off="true">Formatvorlagentyp:</label>
        <Select id="type" value="Verknüpft (Absatz und Zeichen)" off />
        <label htmlFor="base">Formatvorlage <u>b</u>asiert auf:</label>
        <Select id="base" value="¶ Standard" $pad={12} />
        <label htmlFor="next">Formatvorlage für folgenden <u>A</u>bsatz:</label>
        <Select id="next" value="¶ Standard" $pad={12} />
      </Fields>
      <Legend>Formatierung</Legend>
      <FormatRow $mt={4} $line>
        <Select label="Schriftart" value="Arial" $w={143} />
        <Spacer $w={4} />
        <Select label="Schriftgrad" value="14" $w={60} />
        <Sep />
        <Tool type="button" $bold $w={26}>F</Tool>
        <Tool type="button" $bold $italic $w={26}>K</Tool>
        <Tool type="button" $bold $line="underline" $w={26}>U</Tool>
        <Sep />
        <Select label="Schriftfarbe" value="Automatisch" $w={139} $center />
      </FormatRow>
      <FormatRow $mt={3}>
        <AlignTool type="button" $active aria-label="Linksbündig"><AlignIcon kind="left" /></AlignTool>
        <AlignTool type="button" aria-label="Zentriert"><AlignIcon kind="center" /></AlignTool>
        <AlignTool type="button" aria-label="Rechtsbündig"><AlignIcon kind="right" /></AlignTool>
        <AlignTool type="button" aria-label="Blocksatz"><AlignIcon kind="justify" /></AlignTool>
        <Sep $m={0} /><Spacer $w={11} />
        <AlignTool type="button" aria-label="Einfach"><SpacingIcon gap={3} /></AlignTool>
        <AlignTool type="button" aria-label="Anderthalbfach"><SpacingIcon gap={4} /></AlignTool>
        <AlignTool type="button" aria-label="Doppelt"><SpacingIcon gap={5} /></AlignTool>
        <Sep $m={0} /><Spacer $w={11} />
        <AlignTool type="button" aria-label="Abstand vergrößern"><ParaSpaceIcon /></AlignTool>
        <AlignTool type="button" aria-label="Abstand verkleinern"><ParaSpaceIcon inward /></AlignTool>
        <Sep $m={0} /><Spacer $w={5} />
        <AlignTool type="button" aria-label="Einzug verkleinern"><IndentIcon /></AlignTool>
        <AlignTool type="button" aria-label="Einzug vergrößern"><IndentIcon inward /></AlignTool>
      </FormatRow>
      <Preview>
        <p>
          <span>{repeat('Vorhergehender Absatz', 4)} Vorhergehender</span>
          <span>Absatz {repeat('Vorhergehender Absatz', 4)}</span>
        </p>
        <h2>Einleitung</h2>
        <p>{[0, 1, 0, 1, 0].map((n, i) => <span key={i}>{NEXT[n]}</span>)}</p>
      </Preview>
      <Description>
        <p>{'Schriftart: (Standard) Arial, 14 Pt., Abstand\n    Vor:  12 Pt.\n    Nach:  0 Pt., Nicht vom nächsten Absatz trennen, Diesen Absatz zusammenhalten, Ebene 1, Formatvorlage:\nVerknüpft, Im Formatvorlagenkatalog anzeigen, Priorität: 10'}</p>
        <ScrollBar><Chevron up /><i /><Chevron /></ScrollBar>
      </Description>
      <Choices $mt={9}>
        <CheckLabel><CheckInput type="checkbox" defaultChecked /><span><u>Z</u>um Formatvorlagenkatalog hinzufügen</span></CheckLabel>
        <CheckLabel><CheckInput type="checkbox" /><span>A<u>u</u>tomatisch aktualisieren</span></CheckLabel>
      </Choices>
      <Choices $mt={4}>
        <CheckLabel><CheckInput type="radio" name="scope" defaultChecked /><span>N<u>u</u>r in diesem Dokument</span></CheckLabel>
        <CheckLabel><CheckInput type="radio" name="scope" />Neue auf dieser Vorlage basierende Dokumente</CheckLabel>
      </Choices>
      <DialogButtons>
        <DialogButton type="button" $primary><span><u>F</u>ormat</span><Down s={6} c="#222" /></DialogButton>
        <DialogButton type="submit">OK</DialogButton>
        <DialogButton type="button">Abbrechen</DialogButton>
        <Menu>
          {MENU.map(([a, u, b], i) => (
            <li key={i}><MenuItem type="button" $active={i === 1}>{a}<u>{u}</u>{b}</MenuItem></li>
          ))}
        </Menu>
      </DialogButtons>
    </DialogBody>
  </Dialog>
)

const App = () => {
  return <Screen>
    <GlobalStyle />
    <TabStrip>
      {TABS.map(t => <Tab key={t} $active={t === 'Start'}>{t}</Tab>)}
      <TellMe><BulbIcon />Was möchten Sie tun?</TellMe>
      <ShareArea>
        <ShareButton><ShareIcon />Teilen</ShareButton>
        <button aria-label="Kommentare"><CommentIcon /></button>
      </ShareArea>
    </TabStrip>
    <RibbonBar />
    <Middle>
      <Document />
      <StylesPane />
    </Middle>
    <StatusBar>
      <span>Seite 6 von 18</span>
      <span>5095 Wörter</span>
      <MacroIcon />
      <ViewButtons>
        <button aria-label="Lesemodus"><BookIcon /></button>
        <button aria-label="Seitenlayout"><PrintViewIcon /></button>
        <button aria-label="Weblayout"><WebViewIcon /></button>
      </ViewButtons>
      <Zoom>
        <button aria-label="Verkleinern"><svg width="7" height="9"><path d="M0 4.500h7" stroke="#555" strokeWidth="2" /></svg></button>
        <input type="range" aria-label="Zoom" defaultValue="50" />
        <button aria-label="Vergrößern"><svg width="8" height="8"><path d="M0 4h8M4 0v8" stroke="#555" strokeWidth="2" /></svg></button>
        <span>100 %</span>
      </Zoom>
    </StatusBar>
    <TaskbarEdge />
    <StyleDialog />
    <Pointer width="13" height="21" viewBox="0 0 13 19"><path d={ArrowPath} fill="#f2f2f2" stroke="#333" /></Pointer>
    <RedFrame />
    <RedArrow width="106" height="18" viewBox="0 0 106 18"><path d="M0 6h89V0l17 9-17 9v-6H0z" fill={C.red} /></RedArrow>
  </Screen>
}

export default App
